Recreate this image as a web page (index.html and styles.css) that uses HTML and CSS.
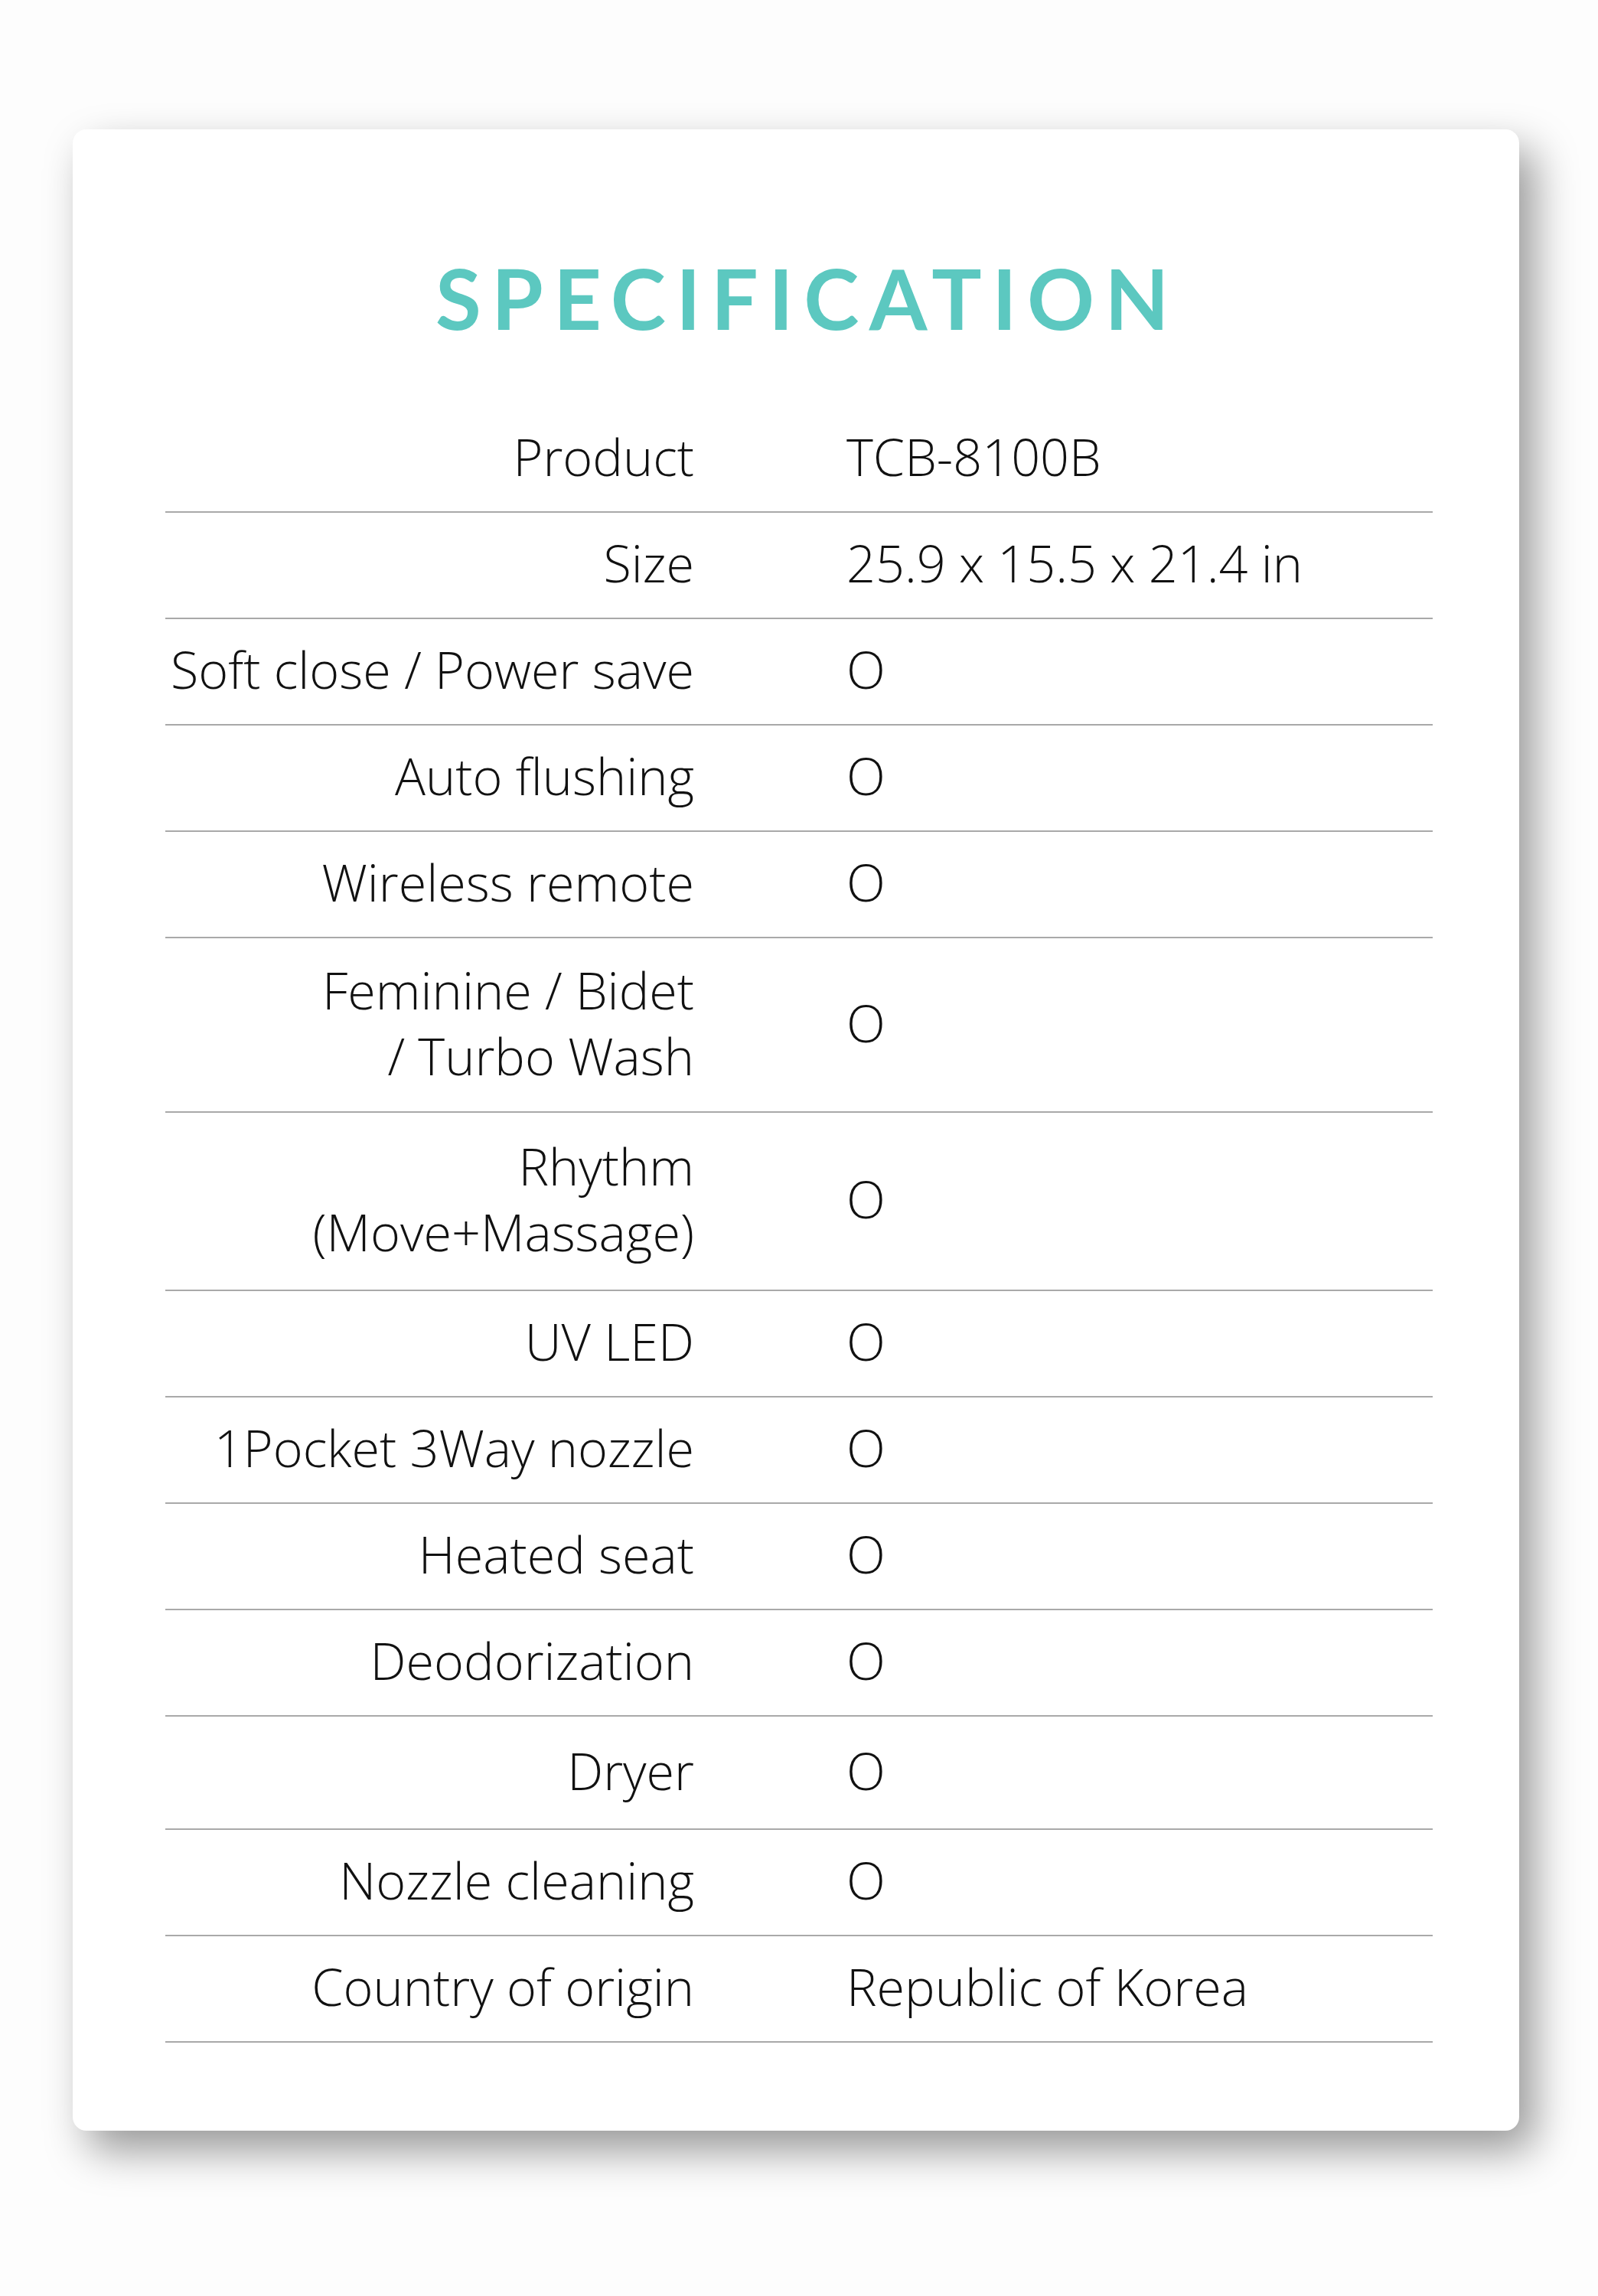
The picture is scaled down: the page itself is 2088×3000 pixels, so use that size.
FILE: index.html
```html
<!DOCTYPE html>
<html lang="en">
<head>
<meta charset="utf-8">
<title>Specification</title>
<link rel="stylesheet" href="styles.css">
</head>
<body>
<div class="page">
  <section class="card">
    <h1 class="title">SPECIFICATION</h1>
    <div class="spec">
      <div class="row"><div class="label">Product</div><div class="value">TCB-8100B</div></div>
      <div class="row"><div class="label">Size</div><div class="value">25.9 x 15.5 x 21.4 in</div></div>
      <div class="row"><div class="label">Soft close / Power save</div><div class="value">O</div></div>
      <div class="row"><div class="label">Auto flushing</div><div class="value">O</div></div>
      <div class="row"><div class="label">Wireless remote</div><div class="value">O</div></div>
      <div class="row row-double"><div class="label">Feminine / Bidet<br>/ Turbo Wash</div><div class="value">O</div></div>
      <div class="row row-double row-tall"><div class="label">Rhythm<br>(Move+Massage)</div><div class="value">O</div></div>
      <div class="row"><div class="label">UV LED</div><div class="value">O</div></div>
      <div class="row"><div class="label">1Pocket 3Way nozzle</div><div class="value">O</div></div>
      <div class="row"><div class="label">Heated seat</div><div class="value">O</div></div>
      <div class="row"><div class="label">Deodorization</div><div class="value">O</div></div>
      <div class="row row-wide"><div class="label">Dryer</div><div class="value">O</div></div>
      <div class="row"><div class="label">Nozzle cleaning</div><div class="value">O</div></div>
      <div class="row"><div class="label">Country of origin</div><div class="value">Republic of Korea</div></div>
    </div>
  </section>
</div>
</body>
</html>
```
FILE: styles.css
```css
html, body {
  margin: 0;
  padding: 0;
  background: #fdfdfd;
}

.page {
  padding: 169px 0 0 95px;
  min-height: 3000px;
  box-sizing: border-box;
}

.card {
  width: 1890px;
  height: 2615px;
  box-sizing: border-box;
  background: #ffffff;
  border-radius: 18px;
  box-shadow: 20px 26px 55px rgba(0, 0, 0, 0.4);
  padding: 165px 113px 0 121px;
}

.title {
  margin: 0;
  font-family: "Lato", "Noto Sans", sans-serif;
  font-weight: 700;
  font-size: 109px;
  line-height: 1;
  letter-spacing: 13.5px;
  text-align: center;
  color: #5cc8c0;
  padding-left: 22px;
}

.spec {
  margin-top: 88px;
  font-family: "Open Sans", "Noto Sans", sans-serif;
  font-weight: 300;
  font-size: 66.5px;
  line-height: 86px;
  color: #111111;
}

.row {
  display: grid;
  grid-template-columns: 691px 1fr;
  column-gap: 199px;
  align-items: center;
  min-height: 137px;
  border-bottom: 2px solid #a9a9a9;
  box-sizing: content-box;
}

.row-double {
  min-height: 226px;
}

.row-tall {
  min-height: 231px;
}

.row-wide {
  min-height: 146px;
}

.label,
.value {
  padding-bottom: 7px;
}

.label {
  text-align: right;
}

.value {
  text-align: left;
}
```
